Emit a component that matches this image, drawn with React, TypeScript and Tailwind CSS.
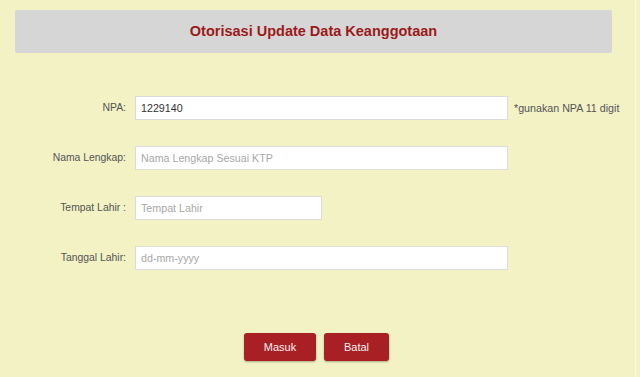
export default function App() {
  const label = "w-[135px] shrink-0 pr-[9px] text-right text-[10.4px] text-[#555555]";
  const input =
    "h-[24px] shrink-0 px-[5px] border border-[#dcdcdc] bg-white text-[10.7px] text-[#333] placeholder-[#a8a8a8] outline-none";

  return (
    <div
      className="w-[640px] h-[377px] bg-[#f2f2c5] flex"
      style={{ fontFamily: '"Liberation Sans", Arial, sans-serif' }}
    >
      <div className="w-[636px] shrink-0 border-r border-[#f8f8e0] pt-[10px]">
        <div className="ml-[15px] w-[597px] h-[43px] rounded-[2px] bg-[#d6d6d6] flex items-center justify-center">
          <h1 className="text-[14.5px] font-bold text-[#9b1a1a]">Otorisasi Update Data Keanggotaan</h1>
        </div>

        <div className="mt-[43px] flex flex-col gap-[26px]">
          <div className="flex items-center">
            <span className={label}>NPA:</span>
            <input className={`${input} w-[373px]`} defaultValue="1229140" />
            <span className="ml-[6px] whitespace-nowrap text-[10.7px] text-[#555555]">*gunakan NPA 11 digit</span>
          </div>
          <div className="flex items-center">
            <span className={label}>Nama Lengkap:</span>
            <input className={`${input} w-[373px]`} placeholder="Nama Lengkap Sesuai KTP" />
          </div>
          <div className="flex items-center">
            <span className={label}>Tempat Lahir :</span>
            <input className={`${input} w-[187px]`} placeholder="Tempat Lahir" />
          </div>
          <div className="flex items-center">
            <span className={label}>Tanggal Lahir:</span>
            <input className={`${input} w-[373px]`} placeholder="dd-mm-yyyy" />
          </div>
        </div>

        <div className="mt-[63px] flex justify-center gap-[8px] pr-[2px]">
          <button className="w-[72px] h-[28px] rounded-[3px] bg-[#a81f24] text-[#f4f0f0] text-[11px] font-medium shadow-[0_1px_2px_rgba(0,0,0,0.3)]">
            Masuk
          </button>
          <button className="w-[65px] h-[28px] rounded-[3px] bg-[#a81f24] text-[#f4f0f0] text-[11px] font-medium shadow-[0_1px_2px_rgba(0,0,0,0.3)]">
            Batal
          </button>
        </div>
      </div>
    </div>
  );
}
